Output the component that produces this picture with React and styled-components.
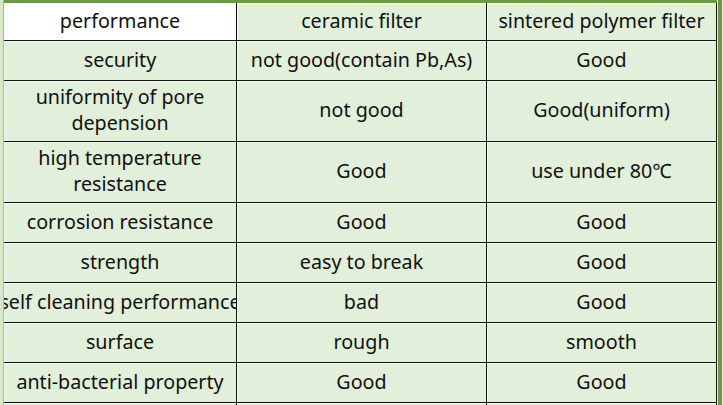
import styled, { createGlobalStyle } from "styled-components";

const Global = createGlobalStyle`
  html, body {
    margin: 0;
    padding: 0;
    background: #e2efda;
    overflow: hidden;
  }
  body {
    font-family: "Noto Sans", "Open Sans", sans-serif;
    color: #111;
  }
`

const Page = styled.div`
  display: flex;
  width: 723px;
  height: 405px;
  overflow: hidden;
  background: #e2efda;
`

const LeftStrip = styled.div`
  width: 3px;
  background: #d6e8c8;
  border-right: 1px solid #a9bb9c;
`

const Sheet = styled.div`
  display: flex;
  flex-direction: column;
  border-top: 3px solid #6c9a44;
`

const Grid = styled.div`
  display: grid;
  grid-template-columns: 232px 249px 229px;
  grid-template-rows: 37px 39px 60px 60px 39px 39px 39px 39px 39px 10px;
  gap: 1px;
  background: #111;
  border-right: 1px solid #111;
`

const Cell = styled.div`
  display: flex;
  align-items: center;
  justify-content: center;
  text-align: center;
  overflow: hidden;
  white-space: ${p => (p.$wrap ? "normal" : "nowrap")};
  background: ${p => (p.$white ? "#ffffff" : "#e2efda")};
  font-size: 19.7px;
  line-height: 26px;
  padding: ${p => (p.$wrap ? "0 4px 2px" : "0 0 2px")};
  box-shadow: inset 1px 1px 0 #f3f9ee;
`

const RightBar = styled.div`
  width: 4px;
  margin-left: 1px;
  background: #6c9a44;
`

const header = ["performance", "ceramic filter", "sintered polymer filter"]

const rows = [
  ["security", "not good(contain Pb,As)", "Good"],
  ["uniformity of pore depension", "not good", "Good(uniform)"],
  ["high temperature resistance", "Good", "use under 80\u2103"],
  ["corrosion resistance", "Good", "Good"],
  ["strength", "easy to break", "Good"],
  ["self cleaning performance", "bad", "Good"],
  ["surface", "rough", "smooth"],
  ["anti-bacterial property", "Good", "Good"],
  ["", "", ""],
]

export default function App() {
  return (
    <>
      <Global />
      <Page>
        <LeftStrip />
        <Sheet>
          <Grid>
            {header.map((h, i) => (
              <Cell key={h} $white={i === 0}>{h}</Cell>
            ))}
            {rows.map((r, ri) =>
              r.map((c, ci) => (
                <Cell key={ri + "-" + ci} $wrap={ci === 0 && (ri === 1 || ri === 2)}>
                  {c}
                </Cell>
              ))
            )}
          </Grid>
        </Sheet>
        <RightBar />
      </Page>
    </>
  )
}
